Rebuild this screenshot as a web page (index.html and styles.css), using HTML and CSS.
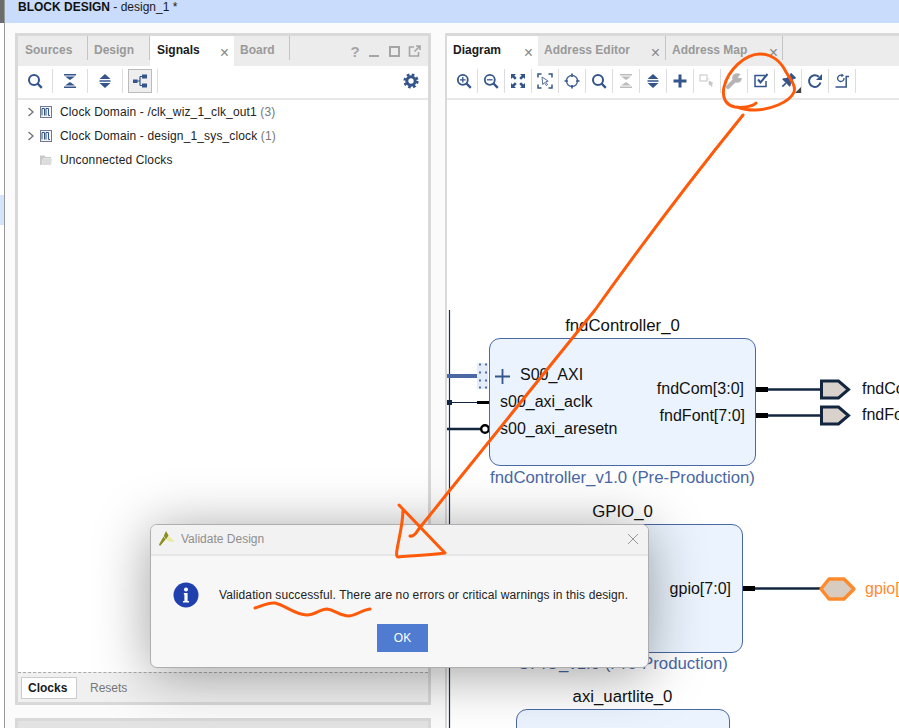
FILE: index.html
```html
<!DOCTYPE html>
<html lang="en">
<head>
<meta charset="utf-8">
<title>Block Design</title>
<link rel="stylesheet" href="styles.css">
</head>
<body>
<div class="strip"><div class="strip-top"></div><div class="strip-mark"></div></div>
<div class="page">
  <header class="title-bar"><b>BLOCK DESIGN</b> - design_1 *</header>
  <main class="main">
    <div class="left-col">
      <section class="panel signals">
        <div class="tabs">
          <div class="tab tab-sources">Sources</div>
          <div class="tab tab-design">Design</div>
          <div class="tab tab-signals active">Signals<span class="x">×</span></div>
          <div class="tab tab-board">Board</div>
          <div class="win-icons">
            <span class="help">?</span>
            <svg width="14" height="14" viewBox="0 0 14 14"><rect x="1" y="11" width="10" height="2" fill="#a5a5a5"/></svg>
            <svg width="14" height="14" viewBox="0 0 14 14"><rect x="2" y="3" width="9" height="9" fill="none" stroke="#a5a5a5" stroke-width="2"/></svg>
            <svg width="14" height="14" viewBox="0 0 14 14"><path d="M6 3H1.500v9h9V8M6.500 7.500l5-5M8 2h4v4" fill="none" stroke="#a5a5a5" stroke-width="1.6"/></svg>
          </div>
        </div>
        <div class="toolbar toolbar-left">
          <div class="tb"><svg width="16" height="16" viewBox="0 0 16 16"><circle cx="7" cy="7" r="5" fill="none" stroke="#34558b" stroke-width="2"/><path d="M10.500 10.500l4.300 4.300" stroke="#34558b" stroke-width="2.400"/></svg></div>
          <div class="tb"><svg width="16" height="16" viewBox="0 0 16 16"><path d="M2 1h12v1.500H2zM3 3.500h10L8 7zM3 12.500h10L8 9zM2 13.500h12V15H2z" fill="#34558b"/></svg></div>
          <div class="tb"><svg width="16" height="16" viewBox="0 0 16 16"><path d="M8 1l5.500 5h-11zM2.500 7.200h11v1.600h-11zM2.500 10h11L8 15z" fill="#34558b"/></svg></div>
          <div class="tb"><span class="pressed"><svg width="16" height="16" viewBox="0 0 16 16"><path d="M1 6.500h4.500v3.500H1zM10 1.500h5v4h-5zM10 10.500h5v4h-5z" fill="#34558b"/><path d="M5 8h3M8 3.500v9M8 3.500h2M8 12.500h2" fill="none" stroke="#34558b" stroke-width="1.200"/></svg></span></div>
          <div class="tb tb-gear"><svg width="16" height="16" viewBox="0 0 16 16"><circle cx="8" cy="8" r="4.200" fill="none" stroke="#34558b" stroke-width="3"/><circle cx="8" cy="8" r="6.300" fill="none" stroke="#34558b" stroke-width="2.600" stroke-dasharray="2.600 2.350"/></svg></div>
        </div>
        <ul class="tree">
          <li class="row">
            <svg class="chev" width="8" height="10" viewBox="0 0 8 10"><path d="M1.500 1l4.500 4-4.500 4" fill="none" stroke="#777" stroke-width="1.400"/></svg>
            <svg class="clk" width="12" height="12" viewBox="0 0 12 12"><rect x=".5" y=".5" width="11" height="11" fill="#f4f6fa" stroke="#707a8c"/><path d="M2 9.500V2.500h2.500v7M6 9.500V2.500h2.500v7H10" fill="none" stroke="#34558b"/></svg>
            <span>Clock Domain - /clk_wiz_1_clk_out1 <i>(3)</i></span>
          </li>
          <li class="row">
            <svg class="chev" width="8" height="10" viewBox="0 0 8 10"><path d="M1.500 1l4.500 4-4.500 4" fill="none" stroke="#777" stroke-width="1.400"/></svg>
            <svg class="clk" width="12" height="12" viewBox="0 0 12 12"><rect x=".5" y=".5" width="11" height="11" fill="#f4f6fa" stroke="#707a8c"/><path d="M2 9.500V2.500h2.500v7M6 9.500V2.500h2.500v7H10" fill="none" stroke="#34558b"/></svg>
            <span>Clock Domain - design_1_sys_clock <i>(1)</i></span>
          </li>
          <li class="row">
            <span class="chev-space"></span>
            <svg class="clk" width="12" height="12" viewBox="0 0 12 12"><path d="M0 1.500h4.500l1 1.500H11v1.500H3L1.500 11H0z" fill="#c9c9c9"/><path d="M3.200 5H12l-1 6H1.800z" fill="#dcdcdc"/></svg>
            <span>Unconnected Clocks</span>
          </li>
        </ul>
        <div class="sub-tabs">
          <div class="sub-tab active">Clocks</div>
          <div class="sub-tab">Resets</div>
        </div>
      </section>
      <section class="panel lower"></section>
    </div>

    <section class="panel diagram">
      <div class="tabs">
        <div class="tab tab-diagram active">Diagram<span class="x">×</span></div>
        <div class="tab tab-addr">Address Editor<span class="x">×</span></div>
        <div class="tab tab-map">Address Map<span class="x">×</span></div>
      </div>
      <div class="toolbar toolbar-right">
        <div class="tb"><svg width="16" height="16" viewBox="0 0 16 16"><circle cx="6.800" cy="6.800" r="5" fill="none" stroke="#34558b" stroke-width="1.800"/><path d="M10.500 10.500l4.300 4.300" stroke="#34558b" stroke-width="2.400"/><path d="M4 6.800h5.600M6.800 4v5.600" stroke="#34558b" stroke-width="1.300"/></svg></div>
        <div class="tb"><svg width="16" height="16" viewBox="0 0 16 16"><circle cx="6.800" cy="6.800" r="5" fill="none" stroke="#34558b" stroke-width="1.800"/><path d="M10.500 10.500l4.300 4.300" stroke="#34558b" stroke-width="2.400"/><path d="M4 6.800h5.600" stroke="#34558b" stroke-width="1.300"/></svg></div>
        <div class="tb"><svg width="16" height="16" viewBox="0 0 16 16"><path d="M1 1h5L4.400 2.600l2.300 2.300-1.800 1.800-2.300-2.300L1 6zM15 1v5l-1.600-1.600-2.300 2.300-1.800-1.800 2.300-2.300L10 1zM1 15v-5l1.600 1.600 2.300-2.300 1.800 1.800-2.300 2.300L6 15zM15 15h-5l1.600-1.600-2.300-2.300 1.800-1.800 2.300 2.300L15 10z" fill="#34558b"/></svg></div>
        <div class="tb"><svg width="16" height="16" viewBox="0 0 16 16"><path d="M1 4.500V1h3.500M11.500 1H15v3.500M1 11.500V15h3.500M15 11.500V15h-3.500" fill="none" stroke="#34558b" stroke-width="1.500"/><path d="M5 4l6.200 4.200-2.600.6 2 3-1.200.8-2-3-1.600 2z" fill="#fff" stroke="#5a7199"/></svg></div>
        <div class="tb"><svg width="16" height="16" viewBox="0 0 16 16"><circle cx="8" cy="8" r="5.500" fill="none" stroke="#4a6899" stroke-width="1.400"/><path d="M8 .5v3.400M8 12.100v3.400M.5 8h3.400M12.100 8h3.400" stroke="#34558b" stroke-width="1.600"/></svg></div>
        <div class="tb"><svg width="16" height="16" viewBox="0 0 16 16"><circle cx="7" cy="7" r="5" fill="none" stroke="#34558b" stroke-width="2"/><path d="M10.500 10.500l4.300 4.300" stroke="#34558b" stroke-width="2.400"/></svg></div>
        <div class="tb"><svg width="16" height="16" viewBox="0 0 16 16"><path d="M2 1h12v1.500H2zM3 3.500h10L8 7zM3 12.500h10L8 9zM2 13.500h12V15H2z" fill="#bcbcbc"/></svg></div>
        <div class="tb"><svg width="16" height="16" viewBox="0 0 16 16"><path d="M8 1l5.500 5h-11zM2.500 7.200h11v1.600h-11zM2.500 10h11L8 15z" fill="#34558b"/></svg></div>
        <div class="tb"><svg width="16" height="16" viewBox="0 0 16 16"><path d="M6.500 1.500h3v5h5v3h-5v5h-3v-5h-5v-3h5z" fill="#34558b"/></svg></div>
        <div class="tb"><svg width="16" height="16" viewBox="0 0 16 16"><rect x="1" y="2" width="7" height="6" fill="#fff" stroke="#c4c4c4"/><path d="M8 6h3M10 8l4 2-1.500 .8.800 2.200-1 .4-.9-2.200-1.400 1z" fill="#c4c4c4" stroke="#c4c4c4" stroke-width=".5"/></svg></div>
        <div class="tb"><svg width="18" height="18" viewBox="0 0 18 18"><path d="M3 15L10 8" stroke="#b4b4b4" stroke-width="4" stroke-linecap="round"/><circle cx="12" cy="6" r="4.800" fill="#b4b4b4"/><path d="M12.500 5.500L18 0v6h-3z" fill="#fff"/></svg></div>
        <div class="tb"><svg width="16" height="16" viewBox="0 0 16 16"><path d="M13 8v5.500H2v-11h10" fill="none" stroke="#34558b" stroke-width="1.500"/><path d="M5 6.500l2.500 3L14.500 1" fill="none" stroke="#34558b" stroke-width="2"/></svg></div>
        <div class="tb"><svg width="16" height="16" viewBox="0 0 16 16"><g transform="rotate(45 8 8)"><path d="M4.500 0h7v2h-1l.8 5 2 2.500v1.500H2.700V9.500l2-2.500.8-5h-1z" fill="#34558b"/><rect x="7.200" y="11" width="1.600" height="5" fill="#34558b"/></g></svg><svg class="corner" width="6" height="6" viewBox="0 0 6 6"><path d="M6 0v6H0z" fill="#444"/></svg></div>
        <div class="tb"><svg width="16" height="16" viewBox="0 0 16 16"><path d="M13.500 9.500A5.800 5.800 0 1 1 11.800 3.800" fill="none" stroke="#34558b" stroke-width="2"/><path d="M15 1v6H9z" fill="#34558b"/></svg></div>
        <div class="tb"><svg width="16" height="16" viewBox="0 0 16 16"><path d="M10 5a3.200 3.200 0 1 1-1.500-2.400" fill="none" stroke="#34558b" stroke-width="1.300"/><path d="M7.500 .5l2.500 2-2.500 1.800z" fill="#34558b"/><path d="M15 3.500h-2.800v10.500H1.500" fill="none" stroke="#34558b" stroke-width="1.500"/></svg></div>
      </div>
      <div class="canvas">
        <svg class="wires" width="452" height="628" viewBox="447 100 452 628">
          <path d="M449.500 310V728" stroke="#16305f" stroke-width="1.200" fill="none"/>
          <rect x="477" y="363" width="11" height="26" fill="#e3ecf8"/>
          <path d="M479 364.500h2M485 364.500h2M479 372.500h2M485 372.500h2M479 380.500h2M485 380.500h2M479 387.500h2M485 387.500h2" stroke="#4f6fa8" stroke-width="2"/>
          <rect x="447" y="374" width="30" height="4" fill="#4a68a5"/>
          <path d="M449 402.500h28" stroke="#12263f"/>
          <rect x="447" y="400" width="5" height="5" fill="#12263f"/>
          <rect x="477" y="401" width="12" height="3" fill="#000"/>
          <path d="M447 429h34" stroke="#12263f" stroke-width="2.400"/>
          <circle cx="485" cy="429" r="3.800" fill="#fff" stroke="#000" stroke-width="2.400"/>
          <rect x="755" y="387" width="13" height="5" fill="#000"/>
          <path d="M768 389.500h53" stroke="#12263f" stroke-width="2.400"/>
          <path d="M821.500 381h17l10 8.500-10 8.500h-17z" fill="#d9d2cc" stroke="#12263f" stroke-width="3"/>
          <rect x="755" y="413" width="13" height="5" fill="#000"/>
          <path d="M768 415.500h53" stroke="#12263f" stroke-width="2.400"/>
          <path d="M821.500 407h17l10 8.500-10 8.500h-17z" fill="#d9d2cc" stroke="#12263f" stroke-width="3"/>
          <rect x="742" y="586" width="13" height="5" fill="#000"/>
          <path d="M755 588.500h67" stroke="#12263f" stroke-width="2.400"/>
          <path d="M829 579h15l10 10-10 10h-15l-8-10z" fill="#d8ccc0" stroke="#ff8a2c" stroke-width="3.400" stroke-linejoin="round"/>
        </svg>

        <div class="node-title t-fnd">fndController_0</div>
        <div class="block b-fnd">
          <div class="ports-in">
            <div class="port p-axi"><svg class="plus" width="15" height="15" viewBox="0 0 15 15"><path d="M7.500 0v15M0 7.500h15" stroke="#34558b" stroke-width="1.800"/></svg>S00_AXI</div>
            <div class="port">s00_axi_aclk</div>
            <div class="port">s00_axi_aresetn</div>
          </div>
          <div class="ports-out">
            <div class="port">fndCom[3:0]</div>
            <div class="port p-font">fndFont[7:0]</div>
          </div>
        </div>
        <div class="node-sub s-fnd">fndController_v1.0 (Pre-Production)</div>
        <div class="ext e-com">fndCom[3:0]</div>
        <div class="ext e-font">fndFont[7:0]</div>

        <div class="node-title t-gpio">GPIO_0</div>
        <div class="block b-gpio">
          <div class="ports-out gpio-out"><div class="port">gpio[7:0]</div></div>
        </div>
        <div class="node-sub s-gpio">GPIO_v1.0 (Pre-Production)</div>
        <div class="ext e-gpio">gpio[7:0]</div>

        <div class="node-title t-uart">axi_uartlite_0</div>
        <div class="block b-uart"></div>
      </div>
    </section>
  </main>
</div>

<div class="dialog">
  <div class="dlg-head">
    <svg width="16" height="16" viewBox="0 0 16 16"><path d="M7 0l2.500 4.500L7 8.500 4.800 5z" fill="#8c8c1e"/><path d="M6.500 8.500L4.500 5.500 0 13.500l1 1.500z" fill="#8c8c1e"/><path d="M7.500 9l2.500-4 5.500 5.500c-3 .8-5.500 .2-8-1.500z" fill="#e8eb9c"/></svg>
    <span class="dlg-title">Validate Design</span>
    <svg class="dlg-close" width="12" height="12" viewBox="0 0 12 12"><path d="M1 1l10 10M11 1L1 11" stroke="#999" stroke-width="1"/></svg>
  </div>
  <div class="dlg-body">
    <div class="dlg-msg">
      <svg width="26" height="26" viewBox="0 0 26 26"><circle cx="13" cy="13" r="12.500" fill="#2040ae"/><circle cx="13" cy="7.500" r="2" fill="#fff"/><path d="M10.800 11h3.800v8h1.400v1.500h-6V19h1.400v-6.500h-.6z" fill="#fff"/></svg>
      <span>Validation successful. There are no errors or critical warnings in this design.</span>
    </div>
    <button class="ok">OK</button>
  </div>
</div>

<svg class="ink" width="899" height="728" viewBox="0 0 899 728">
  <path d="M756 103C752 107 742 108 735 107C725 105 722 97 724 87C728 70 745 54 760 54C772 54 781 62 786 72C791 80 796 86 794 92C790 102 770 110 755 110C748 110 742 109 737 107"/>
  <path d="M743 115Q670 205 595 310L450 490L418 530Q414 537 410 536"/>
  <path d="M399 505L445 553C430 555 410 556 398 557C393 557 403 530 403 510"/>
  <path d="M255 608C262 606 268 602 275 603C285 605 295 615 307 615C315 615 320 609 327 609C335 610 340 616 349 616C357 615 362 610 370 609"/>
</svg>
</body>
</html>
```

FILE: styles.css
```css
* { box-sizing: border-box; }
html, body { margin: 0; padding: 0; height: 100%; overflow: hidden; }
body {
  display: flex;
  width: 899px;
  height: 728px;
  background: #fbfbfb;
  font: 12px "Liberation Sans", Arial, sans-serif;
  color: #222;
  position: relative;
}
.strip { width: 5px; flex: none; border-right: 1px solid #999; background: #fff; }
.strip-top { height: 23px; background: #6c6c6c; }
.strip-mark { height: 30px; margin-top: 172px; background: #d5e3fb; }
.page { flex: 1; min-width: 0; display: flex; flex-direction: column; }
.title-bar {
  height: 23px;
  flex: none;
  background: #c9dcfb;
  padding: 0 0 8px 13px;
  line-height: 15px;
  color: #1a1a1a;
}
.title-bar b { color: #111; }
.main { flex: 1; min-height: 0; display: flex; gap: 14px; padding: 10px 0 0 10px; }
.left-col { width: 416px; flex: none; display: flex; flex-direction: column; gap: 13px; }
.panel { border: 3px solid #d9d9d9; background: #fff; display: flex; flex-direction: column; }
.signals { height: 672px; flex: none; }
.lower { flex: 1; background: #e3e3e3; border-bottom: 0; }
.diagram { flex: 1; min-width: 0; border-left-width: 2px; border-right: 0; border-bottom: 0; }

.tabs { height: 30px; flex: none; background: #ececec; display: flex; position: relative; }
.tab { position: relative; font-weight: bold; color: #999; line-height: 29px; padding-left: 7px; height: 30px; }
.tab.active { background: #fff; color: #1a1a1a; }
.tab::after { content: ""; position: absolute; right: 0; top: 0; height: 24px; width: 1px; background: #c4c4c4; }
.tab.active::after { display: none; }
.x { position: absolute; right: 5px; top: 2px; font-weight: normal; font-size: 16px; color: #888; }
.tab-sources { width: 70px; }
.tab-design { width: 62px; padding-left: 6px; }
.tab-signals { width: 84px; }
.tab-board { width: 56px; padding-left: 6px; }
.tab-diagram { width: 91px; padding-left: 6px; }
.tab-addr { width: 128px; padding-left: 6px; }
.tab-map { width: 117px; padding-left: 6px; }
.tab-addr .x { right: 6px; }
.win-icons { margin-left: auto; display: flex; align-items: center; gap: 6px; padding: 0 6px 0 0; height: 30px; }
.help { width: 14px; text-align: center; font-size: 15px; font-weight: bold; color: #a5a5a5; }

.toolbar { height: 34px; flex: none; display: flex; align-items: center; border-bottom: 2px solid #e8e8e8; padding-bottom: 2px; }
.tb { height: 24px; display: flex; align-items: center; justify-content: center; border-right: 1px solid #ddd; position: relative; }
.toolbar-left .tb { width: 35px; }
.toolbar-right { padding-left: 4px; }
.toolbar-right .tb { width: 27px; }
.tb-gear { margin-left: auto; border-right: 0; }
.pressed { width: 24px; height: 24px; display: flex; align-items: center; justify-content: center; background: #eee; border: 1px solid #bbb; }
.corner { position: absolute; right: 0; bottom: 0; }

.tree { flex: 1; margin: 0; padding: 0; list-style: none; }
.row { height: 24px; display: flex; align-items: center; padding-left: 9px; color: #222; letter-spacing: .14px; }
.row i { font-style: normal; color: #777; }
.chev, .chev-space { width: 8px; flex: none; margin-right: 5px; }
.clk { flex: none; margin-right: 8px; }
.sub-tabs {
  height: 30px;
  flex: none;
  display: flex;
  align-items: center;
  padding-left: 3px;
  background: #f0f0f0;
  border-top: 1px dashed #aaa;
}
.sub-tab { height: 22px; padding: 0 8px; line-height: 20px; color: #777; border: 1px solid transparent; margin-right: 4px; }
.sub-tab.active { background: #fff; border-color: #ccc; font-weight: bold; color: #1a1a1a; width: 56px; padding: 0 6px; }

.canvas { flex: 1; min-height: 0; position: relative; overflow: hidden; background: #fff; font-size: 16px; color: #111; }
.wires { position: absolute; left: 0; top: 0; }
.block {
  position: absolute;
  display: flex;
  justify-content: space-between;
  background: #ebf4fe;
  border: 1px solid #4a68a5;
  border-radius: 11px;
}
.b-fnd { left: 42px; top: 238px; width: 267px; height: 128px; padding: 22px 11px 0 10px; }
.b-gpio { left: 55px; top: 424px; width: 241px; height: 129px; padding: 50px 11px 0 0; justify-content: flex-end; }
.b-uart { left: 69px; top: 609px; width: 214px; height: 60px; }
.port { height: 27px; line-height: 27px; white-space: nowrap; }
.p-axi { display: flex; align-items: center; gap: 10px; margin-left: -5px; }
.plus { margin-top: 4px; }
.ports-out { padding-top: 14px; text-align: right; }
.gpio-out { padding-top: 0; }
.p-font { margin-right: -1px; }
.node-title { position: absolute; transform: translateX(-50%); left: 175.5px; line-height: 18px; white-space: nowrap; font-size: 16.8px; }
.t-fnd { top: 217px; }
.t-gpio { top: 403px; }
.t-uart { top: 588px; }
.node-sub { position: absolute; transform: translateX(-50%); left: 175.5px; line-height: 18px; white-space: nowrap; font-size: 16.8px; color: #4a68a5; }
.s-fnd { top: 369px; }
.s-gpio { top: 555px; }
.ext { position: absolute; line-height: 18px; white-space: nowrap; }
.e-com { left: 415px; top: 280px; }
.e-font { left: 415px; top: 306px; }
.e-gpio { left: 418px; top: 480px; color: #ff8a2c; }

.dialog {
  position: absolute;
  left: 150px;
  top: 524px;
  width: 499px;
  height: 144px;
  border: 1px solid #aeaeae;
  border-radius: 7px;
  background: #f7f7f7;
  box-shadow: 0 6px 55px rgba(0, 0, 0, .38);
  overflow: hidden;
  display: flex;
  flex-direction: column;
}
.dlg-head {
  height: 31px;
  flex: none;
  display: flex;
  align-items: center;
  gap: 6px;
  padding: 0 9px 2px 8px;
  background: #f2f2f2;
  border-bottom: 2px solid #e6e6e6;
  color: #8f8f8f;
}
.dlg-close { margin-left: auto; }
.dlg-body { flex: 1; display: flex; flex-direction: column; align-items: center; }
.dlg-msg { align-self: stretch; display: flex; align-items: center; gap: 20px; height: 68px; padding: 9px 0 0 22px; color: #222; letter-spacing: .11px; }
.ok {
  width: 51px;
  height: 28px;
  margin-left: 6px;
  border: 0;
  padding: 0;
  background: #4f7bd0;
  color: #fff;
  font: 12px "Liberation Sans", Arial, sans-serif;
}
.ink { position: absolute; left: 0; top: 0; pointer-events: none; }
.ink path { fill: none; stroke: #ff5a0a; stroke-width: 3; stroke-linecap: round; stroke-linejoin: round; }
```
